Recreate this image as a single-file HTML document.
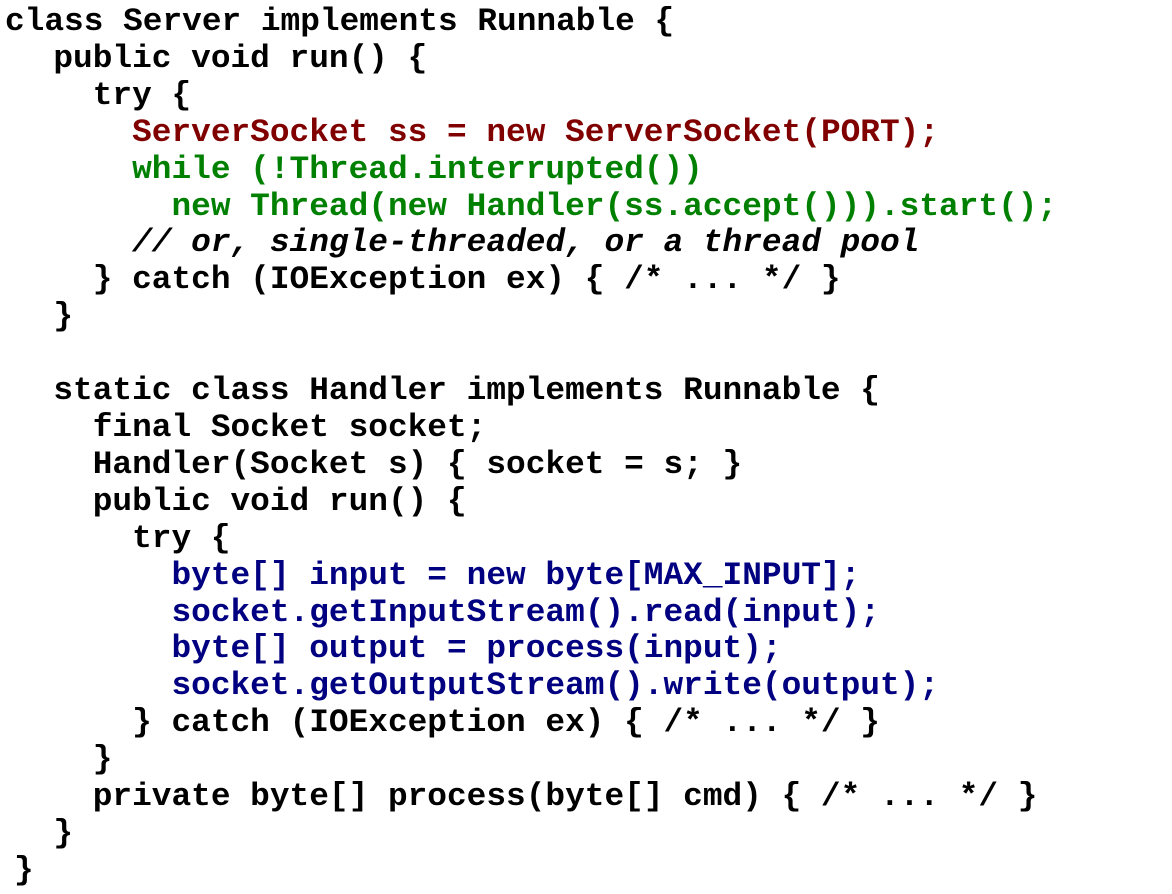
<!DOCTYPE html>
<html><head><meta charset="utf-8"><style>
html,body{margin:0;padding:0;background:#fff;width:1172px;height:894px;overflow:hidden}
pre{margin:0;position:absolute;left:14px;top:4px;font-family:"Liberation Mono",monospace;font-weight:bold;font-size:32.8px;line-height:36.9px;color:#000}
.r{color:#800000}.g{color:#008000}.b{color:#000080}
</style></head><body><pre><span style="margin-left:-9px">class Server implements Runnable {</span>
  public void run() {
    try {
      <span class="r">ServerSocket ss = new ServerSocket(PORT);</span>
      <span class="g">while (!Thread.interrupted())</span>
        <span class="g">new Thread(new Handler(ss.accept())).start();</span>
      <i>// or, single-threaded, or a thread pool</i>
    } catch (IOException ex) { /* ... */ }
  }

  static class Handler implements Runnable {
    final Socket socket;
    Handler(Socket s) { socket = s; }
    public void run() {
      try {
        <span class="b">byte[] input = new byte[MAX_INPUT];</span>
        <span class="b">socket.getInputStream().read(input);</span>
        <span class="b">byte[] output = process(input);</span>
        <span class="b">socket.getOutputStream().write(output);</span>
      } catch (IOException ex) { /* ... */ }
    }
    private byte[] process(byte[] cmd) { /* ... */ }
  }
}</pre></body></html>
